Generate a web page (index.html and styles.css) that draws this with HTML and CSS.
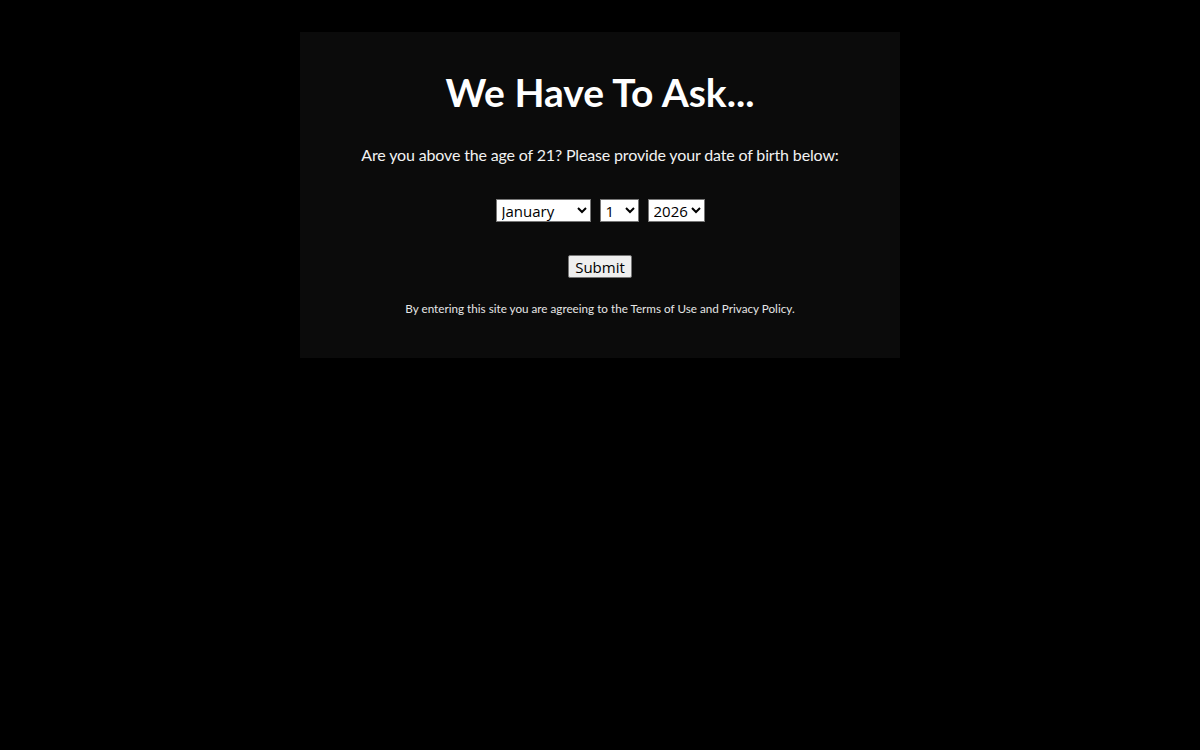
FILE: index.html
```html
<!DOCTYPE html>
<html lang="en">
<head>
<meta charset="utf-8">
<title>Age Verification</title>
<link rel="stylesheet" href="styles.css">
</head>
<body>
<div class="page">
  <div class="panel">
    <h1 class="title">We Have To Ask...</h1>
    <p class="question">Are you above the age of 21? Please provide your date of birth below:</p>
    <form class="dob">
      <div class="selects">
        <select class="sel sel-month">
          <option>January</option><option>February</option><option>March</option><option>April</option>
          <option>May</option><option>June</option><option>July</option><option>August</option>
          <option>September</option><option>October</option><option>November</option><option>December</option>
        </select>
        <select class="sel sel-day">
          <option>1</option><option>2</option><option>3</option>
        </select>
        <select class="sel sel-year">
          <option>2026</option><option>2025</option>
        </select>
      </div>
      <button type="button" class="submit">Submit</button>
    </form>
    <p class="terms">By entering this site you are agreeing to the Terms of Use and Privacy Policy.</p>
  </div>
</div>
</body>
</html>
```

FILE: styles.css
```css
html, body {
  margin: 0;
  padding: 0;
  background: #000;
  height: 100%;
}
body {
  font-family: "Lato", "Noto Sans", sans-serif;
  color: #fff;
}
.page {
  display: flex;
  justify-content: center;
  padding-top: 32px;
}
.panel {
  width: 600px;
  height: 326px;
  box-sizing: border-box;
  background: #0b0b0b;
  text-align: center;
  padding-top: 62px;
}
.title {
  margin: 0;
  font-size: 39px;
  font-weight: 700;
  line-height: 44px;
  height: 44px;
  margin-top: -24px;
}
.question {
  margin: 30px 0 0;
  font-size: 16px;
  letter-spacing: -0.15px;
  line-height: 22px;
  color: #f2f2f2;
}
.dob {
  display: flex;
  flex-direction: column;
  align-items: center;
  margin-top: 33px;
}
.selects {
  display: flex;
  gap: 9px;
  justify-content: center;
}
.sel {
  height: 23px;
  font-family: "Open Sans", "Noto Sans", sans-serif;
  font-size: 15px;
  line-height: 20px;
  border: 1px solid #767676;
  background: #fff;
  color: #000;
  padding: 0 0 0 1px;
  border-radius: 0;
}
.sel-month { width: 95px; }
.sel-day { width: 39px; }
.sel-year { width: 57px; }
.submit {
  margin-top: 33px;
  height: 23px;
  width: 64px;
  font-family: "Open Sans", "Noto Sans", sans-serif;
  font-size: 15px;
  padding: 0;
  border: 1px solid #767676;
  border-radius: 2px;
  background: #efefef;
  color: #000;
  line-height: 20px;
}
.terms {
  margin: 22px 0 0;
  font-size: 11.7px;
  line-height: 16px;
  color: #e6e6e6;
}
```
